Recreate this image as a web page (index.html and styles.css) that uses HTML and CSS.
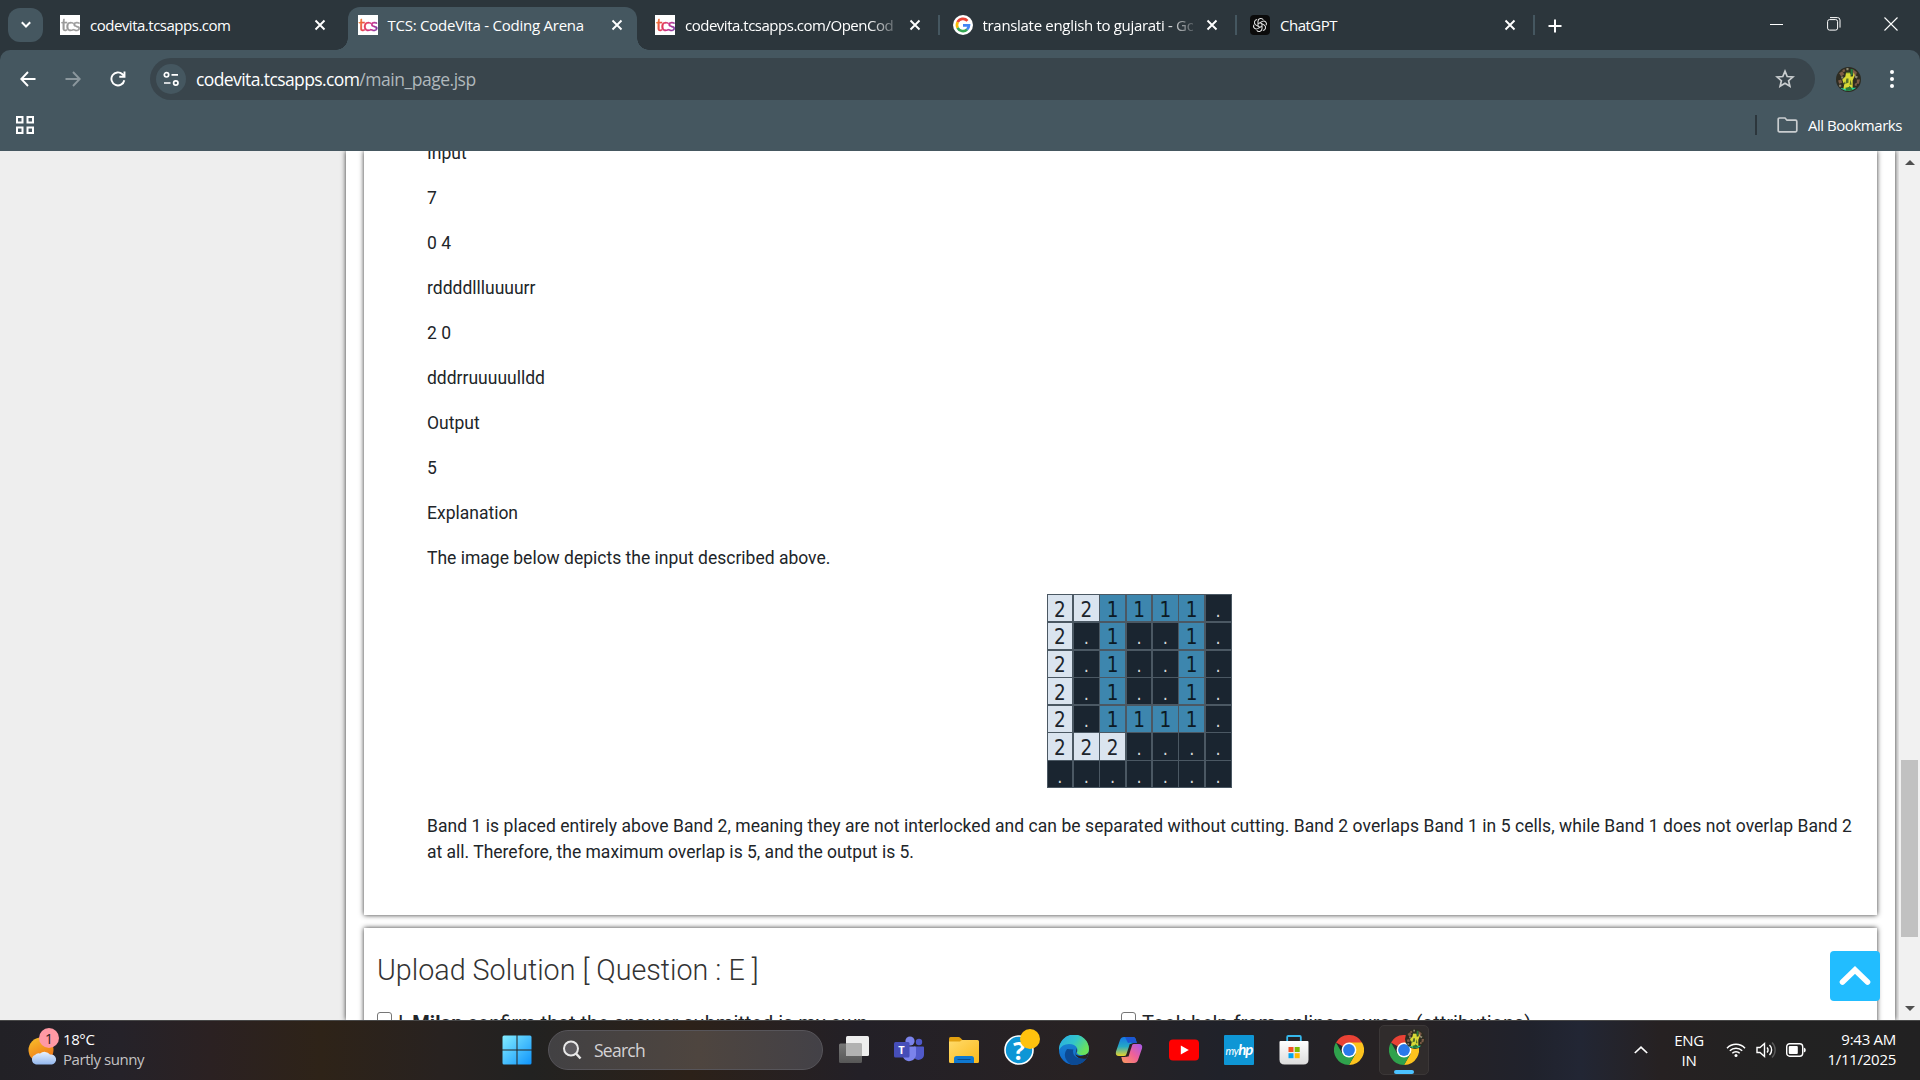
FILE: index.html
```html
<!DOCTYPE html>
<html lang="en">
<head>
<meta charset="utf-8">
<title>TCS: CodeVita - Coding Arena</title>
<link rel="stylesheet" href="styles.css">
</head>
<body>
<svg class="defs" width="0" height="0" aria-hidden="true">
  <defs>
    <symbol id="close" viewBox="0 0 12 12"><path d="M1.5 1.5l9 9M10.5 1.5l-9 9" fill="none" stroke="currentColor" stroke-width="1.9"/></symbol>
    <symbol id="chrome" viewBox="0 0 30 30">
      <path d="M15 15L2 7.5A15 15 0 0 1 28 7.5z" fill="#e94235"/>
      <path d="M15 7.5H28A15 15 0 0 1 15 30L21.5 18.8z" fill="#fcc31e"/>
      <path d="M2 7.5A15 15 0 0 0 15 30L21.5 18.7L8.5 18.7z" fill="#2fa24c"/>
      <circle cx="15" cy="15" r="7.4" fill="#fff"/><circle cx="15" cy="15" r="5.9" fill="#2a79ea"/>
    </symbol>
    <symbol id="photo" viewBox="0 0 24 24">
      <circle cx="12" cy="12" r="12" fill="#2d2c22"/>
      <path d="M3 6l3-2 2 3-3 2zM16 2l4 3-1 4-3-2zM2 13l3-1 1 3-3 1zM20 12l3 0-1 4-2 0zM6 3l2-1 1 2-2 1zM18 16l2-1 0 3-2 0z" fill="#7c5b46"/>
      <path d="M5 9l2 0 0 2-2 0zM3 17l2 0 0 2-2 0zM18 8l3 1-1 2-2-1zM10 1l2 0 0 2-2 0z" fill="#8f8a72"/>
      <path d="M14 2l2 0 0 5-2 2z" fill="#267a3c"/>
      <path d="M9.500 6a2.500 2.500 0 0 1 4.500 1l0 2 2 0 1-4 1 3-2 5 0 8-2 1-1-4-2 4-4-1 1-5-1-1-1-3 3-3z" fill="#d8d936"/>
      <path d="M9.500 6a2.500 2.500 0 0 1 4.500 0zM10 11l2 0 0 4-3 1zM14 12l1 5-2 0zM8 14l1 2-2 1z" fill="#55702a"/>
      <path d="M4 20l5 1 3-1 7.500 0a12 12 0 0 1-14 1z" fill="#25d29a"/>
      <path d="M9 20l5-1 2 3-6 1z" fill="#2c7a35"/>
    </symbol>
    <linearGradient id="win" x1="0" y1="0" x2="1" y2="1"><stop offset="0" stop-color="#83edff"/><stop offset="1" stop-color="#0f94fb"/></linearGradient>
    <linearGradient id="sun" x1="0" y1="0" x2=".5" y2="1"><stop offset="0" stop-color="#f8c32c"/><stop offset="1" stop-color="#ee7415"/></linearGradient>
    <linearGradient id="cloud" x1="0" y1="0" x2="0" y2="1"><stop offset="0" stop-color="#e8f1fd"/><stop offset="1" stop-color="#93b7ee"/></linearGradient>
    <linearGradient id="folder" x1="0" y1="0" x2="1" y2="1"><stop offset="0" stop-color="#ffdb6b"/><stop offset="1" stop-color="#fbb91b"/></linearGradient>
    <linearGradient id="edgeTop" x1="0" y1="0" x2="1" y2=".5"><stop offset="0" stop-color="#28a8e8"/><stop offset=".55" stop-color="#33c5c9"/><stop offset="1" stop-color="#69e35c"/></linearGradient>
    <linearGradient id="edgeLow" x1="0" y1="0" x2="0" y2="1"><stop offset="0" stop-color="#1a8bd6"/><stop offset="1" stop-color="#1066c9"/></linearGradient>
    <linearGradient id="copA" x1="0" y1="0" x2="0" y2="1"><stop offset="0" stop-color="#1477e8"/><stop offset=".5" stop-color="#25a8c4"/><stop offset="1" stop-color="#e8d42a"/></linearGradient>
    <linearGradient id="copB" x1="1" y1="0" x2="0" y2="1"><stop offset="0" stop-color="#a659ee"/><stop offset=".5" stop-color="#ef6197"/><stop offset="1" stop-color="#fb9c5b"/></linearGradient>
    <linearGradient id="store" x1="0" y1="0" x2="0" y2="1"><stop offset="0" stop-color="#fff"/><stop offset="1" stop-color="#dcdcdc"/></linearGradient>
    <linearGradient id="back" x1="0" y1="0" x2="0" y2="1"><stop offset="0" stop-color="#777"/><stop offset="1" stop-color="#575757"/></linearGradient>
  </defs>
</svg>

<header class="browser">
  <div class="tabstrip">
    <button class="tab-search"><svg width="10" height="8" viewBox="0 0 10 8"><path d="M.8 1.300L5 5.500 9.200 1.300" fill="none" stroke="#fff" stroke-width="2"/></svg></button>
    <div class="tab"><span class="fav tcs grey">tcs</span><span class="title">codevita.tcsapps.com</span><svg class="x"><use href="#close"/></svg></div>
    <div class="tab active"><span class="fav tcs">tcs</span><span class="title wide">TCS: CodeVita - Coding Arena</span><svg class="x"><use href="#close"/></svg></div>
    <div class="tab ruled"><span class="fav tcs">tcs</span><span class="title fade">codevita.tcsapps.com/OpenCod</span><svg class="x"><use href="#close"/></svg></div>
    <div class="tab ruled"><svg class="fav" viewBox="0 0 20 20"><circle cx="10" cy="10" r="10" fill="#fff"/><g fill="none" stroke-width="2.700"><path d="M14.500 5.800A6.100 6.100 0 0 0 4.600 7.200" stroke="#ea4335"/><path d="M4.700 7.100A6.100 6.100 0 0 0 4.700 12.900" stroke="#fbbc05"/><path d="M4.600 12.800A6.100 6.100 0 0 0 14.100 14.600" stroke="#34a853"/><path d="M10 10.300H16A6 6 0 0 1 14 14.600" stroke="#4285f4"/></g></svg><span class="title mid fade">translate english to gujarati - Go</span><svg class="x"><use href="#close"/></svg></div>
    <div class="tab ruled"><svg class="fav" viewBox="0 0 20 20"><rect width="20" height="20" rx="4" fill="#0b0b0b"/><g fill="none" stroke="#e4e4e4" stroke-width="1.050"><path d="M8 10.900V6.200a2.900 2.900 0 0 1 5.300-1.400"/><path d="M8 10.900V6.200a2.900 2.900 0 0 1 5.300-1.400" transform="rotate(60 10 10)"/><path d="M8 10.900V6.200a2.900 2.900 0 0 1 5.300-1.400" transform="rotate(120 10 10)"/><path d="M8 10.900V6.200a2.900 2.900 0 0 1 5.300-1.400" transform="rotate(180 10 10)"/><path d="M8 10.900V6.200a2.900 2.900 0 0 1 5.300-1.400" transform="rotate(240 10 10)"/><path d="M8 10.900V6.200a2.900 2.900 0 0 1 5.300-1.400" transform="rotate(300 10 10)"/></g></svg><span class="title">ChatGPT</span><svg class="x"><use href="#close"/></svg></div>
    <svg class="plus" width="14" height="14" viewBox="0 0 14 14"><path d="M7 .500v13M.500 7h13" stroke="#fff" stroke-width="2"/></svg>
    <div class="window-buttons">
      <svg width="14" height="14" viewBox="0 0 14 14"><path d="M0 7.500h13" stroke="#fff"/></svg>
      <svg width="14" height="14" viewBox="0 0 14 14" fill="none" stroke="#fff"><rect x=".600" y="2.600" width="10" height="10.500" rx="2"/><path d="M3 .600h7.500a2.500 2.500 0 0 1 2.500 2.500v7.500"/></svg>
      <svg width="14" height="14" viewBox="0 0 14 14"><path d="M.500 .500l13 13M13.500 .500l-13 13" stroke="#fff" stroke-width="1.100"/></svg>
    </div>
  </div>

  <div class="toolbar">
    <svg class="nav" width="16" height="16" viewBox="0 0 16 16"><path d="M15.500 8H1.500M8 1L1.300 8 8 15" fill="none" stroke="#fff" stroke-width="1.900"/></svg>
    <svg class="nav" width="16" height="16" viewBox="0 0 16 16"><path d="M.500 8h14M8 1l6.700 7L8 15" fill="none" stroke="#8b979d" stroke-width="1.900"/></svg>
    <svg class="nav" width="16" height="16" viewBox="0 0 16 16"><path d="M14.300 9.200A6.500 6.500 0 1 1 12.500 3.300L14.300 5M14.500 .500V5.800H9.300" fill="none" stroke="#fff" stroke-width="1.900"/></svg>
    <div class="address">
      <span class="site"><svg width="16" height="16" viewBox="0 0 16 16" fill="none" stroke="#fff" stroke-width="1.700"><circle cx="3.500" cy="3.800" r="2.200"/><path d="M8.500 3.800H15M1 12h6.500"/><circle cx="12.800" cy="12" r="2.200"/></svg></span>
      <span class="url"><b>codevita.tcsapps.com</b>/main_page.jsp</span>
      <svg class="star" width="20" height="20" viewBox="0 0 20 20"><path d="M10 2.200l2.200 5.300 5.700.500-4.300 3.700 1.300 5.600L10 14.300l-4.900 3 1.300-5.600L2.100 8l5.700-.500z" fill="none" stroke="#c9cdcf" stroke-width="1.700"/></svg>
    </div>
    <svg class="avatar" width="25" height="25"><use href="#photo"/></svg>
    <svg class="dots" width="6" height="20" viewBox="0 0 6 20" fill="#fff"><circle cx="3" cy="3" r="2"/><circle cx="3" cy="10" r="2"/><circle cx="3" cy="17" r="2"/></svg>
  </div>

  <div class="bookmarks">
    <svg width="18" height="18" viewBox="0 0 18 18" fill="none" stroke="#fff" stroke-width="2"><path d="M1 1h5.500v5.500H1zM11.500 1H17v5.500h-5.500zM1 11.500h5.500V17H1zM11.500 11.500H17V17h-5.500z"/></svg>
    <span class="bar"></span>
    <svg class="folder" width="21" height="16" viewBox="0 0 21 16"><path d="M2.500 1H8l2 2.200h8.500q1.300 0 1.300 1.300v9q0 1.300-1.300 1.300h-16q-1.300 0-1.300-1.300V2.300Q1.200 1 2.500 1z" fill="none" stroke="#c9cdcf" stroke-width="1.700"/></svg>
    <span>All Bookmarks</span>
  </div>
</header>

<main class="viewport">
  <div class="sidebar"></div>
  <div class="arena">
    <section class="card problem">
      <p>Input</p>
      <p>7</p>
      <p>0 4</p>
      <p>rddddllluuuurr</p>
      <p>2 0</p>
      <p>dddrruuuuulldd</p>
      <p>Output</p>
      <p>5</p>
      <p>Explanation</p>
      <p>The image below depicts the input described above.</p>
      <div class="grid">
        <i class="b">2</i><i class="b">2</i><i class="a">1</i><i class="a">1</i><i class="a">1</i><i class="a">1</i><i>.</i>
        <i class="b">2</i><i>.</i><i class="a">1</i><i>.</i><i>.</i><i class="a">1</i><i>.</i>
        <i class="b">2</i><i>.</i><i class="a">1</i><i>.</i><i>.</i><i class="a">1</i><i>.</i>
        <i class="b">2</i><i>.</i><i class="a">1</i><i>.</i><i>.</i><i class="a">1</i><i>.</i>
        <i class="b">2</i><i>.</i><i class="a">1</i><i class="a">1</i><i class="a">1</i><i class="a">1</i><i>.</i>
        <i class="b">2</i><i class="b">2</i><i class="b">2</i><i>.</i><i>.</i><i>.</i><i>.</i>
        <i>.</i><i>.</i><i>.</i><i>.</i><i>.</i><i>.</i><i>.</i>
      </div>
      <p class="long"><span>Band 1 is placed entirely above Band 2, meaning they are not interlocked and can be separated without cutting. Band 2 overlaps Band 1 in 5 cells, while Band 1 does not overlap Band 2</span><br>at all. Therefore, the maximum overlap is 5, and the output is 5.</p>
    </section>
    <section class="card upload">
      <h2>Upload Solution [ Question : E ]</h2>
      <div class="checks">
        <label><span class="box"></span><span>I, <b>Milan</b> confirm that the answer submitted is my own.</span></label>
        <label><span class="box"></span><span>Took help from online sources (attributions)</span></label>
      </div>
    </section>
  </div>
  <div class="scrollbar"><span class="arrow up"></span><span class="thumb"></span><span class="arrow down"></span></div>
  <button class="to-top"><svg width="32" height="20" viewBox="0 0 32 20"><path d="M3.500 16L16 4l12.500 12" fill="none" stroke="#fff" stroke-width="5.600" stroke-linecap="round"/></svg></button>
</main>

<footer class="taskbar">
  <div class="weather">
    <svg width="36" height="40" viewBox="0 0 36 40"><circle cx="14" cy="22" r="12.500" fill="url(#sun)"/><path d="M9 36.500a5 5 0 0 1-1-9.500 5 5 0 0 1 5-1.500 7 7 0 0 1 10 1 5 5 0 0 1 2 10z" fill="url(#cloud)"/><circle cx="22" cy="10" r="10" fill="#ff99a4"/></svg>
    <span class="count">1</span>
    <div><span>18°C</span><span class="dim">Partly sunny</span></div>
  </div>
  <div class="apps">
    <svg class="app" viewBox="0 0 30 30"><path d="M.500 2q0-1.500 1.500-1.500h12.500v14H.500zM15.500 .500H28q1.500 0 1.500 1.500v12.500h-14zM.500 15.500h14v14H2q-1.500 0-1.500-1.500zM15.500 15.500h14V28q0 1.500-1.500 1.500H15.500z" fill="url(#win)"/></svg>
    <div class="search"><svg width="20" height="20" viewBox="0 0 20 20" fill="none" stroke="#e8e8e8" stroke-width="2"><circle cx="9" cy="8.500" r="7" fill="#5d5b5f"/><path d="M14 13.500l4.500 5" stroke-width="2.500"/></svg><span>Search</span></div>
    <svg class="app" viewBox="0 0 30 30"><rect x="7" y="1" width="23" height="20" rx="1.500" fill="#eee"/><rect x="0" y="8.500" width="23" height="19.500" rx="1.500" fill="url(#back)"/><path d="M7 8.500h16V21H7z" fill="#b2b2b2"/></svg>
    <div class="app teams"><svg viewBox="0 0 30 30"><circle cx="25" cy="7" r="3.200" fill="#5059c9"/><path d="M20 11.500h9q1 0 1 1V19a5.500 5.500 0 0 1-10 3.500z" fill="#5059c9"/><circle cx="16" cy="6" r="4.600" fill="#7b83eb"/><path d="M9 11.500h12q1 0 1 1V20a6.800 6.800 0 0 1-13 2z" fill="#7b83eb"/><rect x="0" y="7" width="15.500" height="15.500" rx="1.500" fill="#464eb8"/></svg><span>T</span></div>
    <svg class="app" viewBox="0 0 30 30"><path d="M0 8V3.500Q0 2 1.500 2h8q1 0 2 1l2 2v4z" fill="#e2a010"/><path d="M0 6.500h11l2-1.500h15.500q1.500 0 1.500 1.500v20q0 1.500-1.500 1.500h-27Q0 28 0 26.500z" fill="url(#folder)"/><path d="M5 28v-4.500q0-2.500 2.500-2.500h15q2.500 0 2.500 2.500V28z" fill="#0f78d0"/><path d="M8.500 24.500h13" stroke="#0b4c8c"/></svg>
    <div class="app help"><svg viewBox="0 0 30 30"><circle cx="15" cy="15" r="14" fill="#0d96d6" stroke="#fff" stroke-width="1.600"/></svg><span>?</span><em></em></div>
    <svg class="app" viewBox="0 0 30 30"><circle cx="15" cy="15" r="15" fill="url(#edgeLow)"/><path d="M8 14a10 10 0 0 0 11 15.500Q25 28 28 22.500 25 24 21.500 23.500 14 22.500 14 16.500q0-1 .500-2z" fill="#0c4a94"/><path d="M17.500 13q1 4-1.500 6 5 3.500 10.500.500 2.500-1.500 3.500-4A15 15 0 0 1 27.500 23.500Q20 25 16.500 20z" fill="#292425"/><path d="M0 15A15 15 0 0 1 30 14q0 6-6.500 6-6 0-5.500-3 1-1.500 0-4-2-4-8-4-7 0-10 6z" fill="url(#edgeTop)"/></svg>
    <svg class="app" viewBox="0 0 30 30"><path d="M10 2h9q2 0 2.700 2l1 4h-3.500q-2.500 0-3.200 2.500L13.500 18q-1 3-3.500 3H5q-4 0-3-4.500L6 5q1-3 4-3z" fill="url(#copA)"/><path d="M11 2h8q2 0 2.700 2l1 4h-4q-2.500-1-4.700 0z" fill="#1b57d2"/><path d="M20 28h-9q-2 0-2.700-2l-1-4h3.500q2.500 0 3.200-2.500L16.500 12q1-3 3.500-3h5q4 0 3 4.500L24 25q-1 3-4 3z" fill="url(#copB)"/><path d="M15.800 9h2.700l-4 12.500h-2.800z" fill="#2a2021"/></svg>
    <svg class="app" viewBox="0 0 30 30"><rect x="0" y="4.500" width="30" height="21" rx="4" fill="#f00"/><path d="M11.800 10.500v9l8-4.500z" fill="#fff"/></svg>
    <div class="app hp"><span>my<b>hp</b></span></div>
    <svg class="app" viewBox="0 0 30 30"><path d="M8.200 8V2q0-1 1-1h11.600q1 0 1 1v6" fill="none" stroke="#35b8ec" stroke-width="1.800"/><path d="M1.500 6h27q1 0 1 1v17.500q0 5-5 5h-19q-5 0-5-5V7q0-1 1-1z" fill="url(#store)"/><path d="M9.500 12h5v5h-5z" fill="#f25022"/><path d="M15.700 12h5v5h-5z" fill="#7fba00"/><path d="M9.500 18.200h5v5h-5z" fill="#00a4ef"/><path d="M15.700 18.200h5v5h-5z" fill="#ffb900"/></svg>
    <svg class="app"><use href="#chrome"/></svg>
    <div class="app running"><svg width="30" height="30"><use href="#chrome"/></svg><svg class="badge" width="20" height="20"><use href="#photo"/></svg></div>
  </div>
  <div class="tray">
    <svg class="chev" width="14" height="8" viewBox="0 0 14 8"><path d="M.800 7L7 1.200 13.200 7" fill="none" stroke="#fff" stroke-width="1.700"/></svg>
    <div class="lang"><span>ENG</span><span>IN</span></div>
    <svg class="wifi" width="20" height="16" viewBox="0 0 20 16" fill="none" stroke="#fff" stroke-width="1.500"><path d="M1 6.200a12.500 12.500 0 0 1 18 0M3.800 8.700a8.800 8.800 0 0 1 12.400 0M6.300 11.200a5.200 5.200 0 0 1 7.400 0"/><circle cx="10" cy="13.500" r="1.500" fill="#fff" stroke="none"/></svg>
    <svg class="vol" width="20" height="18" viewBox="0 0 20 18" fill="none" stroke="#fff" stroke-width="1.400"><path d="M1 6.500h3L8.500 2.500v13L4 11.500H1z"/><path d="M11 6.500a3.500 3.500 0 0 1 0 5M13.500 4a7 7 0 0 1 0 10"/><path d="M16 1.500a10.500 10.500 0 0 1 0 15" stroke="#5a5a5a"/></svg>
    <svg class="bat" width="20" height="14" viewBox="0 0 20 14"><rect x=".700" y=".700" width="16" height="12.500" rx="3" fill="none" stroke="#fff" stroke-width="1.400"/><rect x="2.800" y="3" width="9" height="8" rx="1" fill="#fff"/><path d="M17.800 4.500q2 .500 2 2.500t-2 2.500z" fill="#fff"/></svg>
    <div class="clock"><span>9:43 AM</span><span>1/11/2025</span></div>
  </div>
</footer>
</body>
</html>
```
FILE: styles.css
```css
* { box-sizing: border-box; }
body {
  margin: 0; width: 1920px; height: 1080px; overflow: hidden;
  display: flex; flex-direction: column;
  font: 15px/20px "Open Sans", "Noto Sans", sans-serif; color: #fff;
}
svg { display: block; flex: none; }
button { border: 0; padding: 0; display: flex; align-items: center; justify-content: center; }
.defs { position: absolute; }

/* browser chrome */
.browser { height: 151px; flex: none; background: #2c363c; }
.tabstrip { height: 50px; display: flex; align-items: center; padding-left: 8px; }
.tab-search { width: 35px; height: 34px; border-radius: 12px; background: #455760; margin-right: 7px; }
.tab { position: relative; width: 297.5px; height: 50px; display: flex; align-items: center; padding: 0 22px 0 10px; flex: none; }
.tab.active { z-index: 1; }
.tab.active::before {
  content: ""; position: absolute; z-index: -1; inset: 7px 8px 0 0;
  background: #455760; border-radius: 12px 12px 0 0;
}
.tab.active::after {
  content: ""; position: absolute; z-index: -1; left: -12px; right: -4px; bottom: 0; height: 12px;
  background:
    radial-gradient(circle at 0 0, transparent 11.5px, #455760 12px) left / 12px 12px no-repeat,
    radial-gradient(circle at 100% 0, transparent 11.5px, #455760 12px) right / 12px 12px no-repeat;
}
.tab.ruled::after { content: ""; position: absolute; right: 3px; top: 15px; width: 2px; height: 20px; background: #455760; }
.fav { width: 20px; height: 20px; flex: none; margin-right: 10px; }
.tcs {
  color: transparent; font: 400 18px/18px "Lato", sans-serif; letter-spacing: -1.6px; text-align: center;
  -webkit-text-stroke: .4px transparent;
  background: linear-gradient(110deg, #f5a11c, #e53a55 40%, #c62d8b 65%, #5a3aa8) text, #fff;
}
.tcs.grey { background: linear-gradient(#999, #999) text, #fff; }
.title { flex: 1; white-space: nowrap; letter-spacing: -.49px; margin-right: 13px; min-width: 0; }
.title.wide { letter-spacing: -.24px; }
.title.mid { letter-spacing: -.31px; }
.title.fade { mask-image: linear-gradient(90deg, #000 87%, rgba(0,0,0,.2)); }
.x { width: 12px; height: 12px; }
.plus { margin: 1px 0 0 10px; }
.window-buttons { display: flex; gap: 43px; margin: -2px 22px 0 auto; }
.toolbar { height: 51px; padding-top: 7px; display: flex; align-items: center; background: #455760; border-radius: 10px 10px 0 0; }
.nav { margin: 0 9px 0 20px; }
.address { margin-left: 15px; width: 1665px; height: 42px; border-radius: 21px; background: #39454c; display: flex; align-items: center; padding: 0 20px 0 6px; }
.site { width: 30px; height: 30px; border-radius: 50%; background: #455760; display: flex; align-items: center; justify-content: center; }
.url { margin-left: 10px; font-size: 17.5px; letter-spacing: -.47px; color: #b0b8bc; flex: 1; }
.url b { font-weight: 400; color: #fff; letter-spacing: -.6px; }
.avatar { margin-left: 21px; }
.dots { margin-left: 28px; }
.bookmarks { height: 50px; background: #455760; display: flex; align-items: center; padding: 0 18px 2px 15.5px; letter-spacing: -.45px; }
.bar { width: 2px; height: 20px; background: #2c363c; margin: 0 20px 0 auto; }
.folder { margin-right: 10px; }

/* page */
.viewport { position: relative; height: 869px; flex: none; display: flex; overflow: hidden; background: #eee; color: #212529; }
.sidebar { width: 346px; flex: none; }
.arena { width: 1549px; flex: none; background: #fff; box-shadow: 0 0 5px #333; padding: 0 18px; }
.card { background: #fff; box-shadow: 0 0 5px #333; }
.problem { height: 764px; overflow: hidden; clip-path: inset(0 -8px -8px -8px); padding: 0 0 0 63px; font: 17.5px/26.25px Roboto, sans-serif; }
.problem p { margin: 0 0 18.75px; white-space: nowrap; }
.problem p:first-child { margin-top: -11px; }
.problem .long { margin-top: 24.5px; }
.long span { letter-spacing: .049px; }
.grid { width: 185px; height: 194px; margin: 23px 0 0 619.5px; display: grid; grid-template: repeat(7, 1fr) / repeat(7, 1fr); gap: 1.500px; padding: 1px; background: #4b5863; }
.grid i { display: flex; align-items: center; justify-content: center; min-width: 0; min-height: 0; background: #1a2530; color: #d8d8d8; font: 18px/24px "DejaVu Sans Condensed", "DejaVu Sans", sans-serif; padding-top: 5px; }
.grid .a, .grid .b { font-size: 20.5px; padding-top: 3px; }
.grid .a { background: #3d86ae; color: #0c1a24; }
.grid .b { background: #dae4ef; color: #1c242c; }
.upload { margin-top: 13px; height: 140px; padding: 22px 0 0 13px; }
.upload h2 { margin: 0; font: 300 28.7px/40px Roboto, sans-serif; color: #333; }
.checks { display: grid; grid-template-columns: 744px 1fr; margin-top: 18px; font: 20px/30px Roboto, sans-serif; color: #212529; white-space: nowrap; }
.checks label { display: flex; gap: 6px; }
.box { width: 15px; height: 15px; margin-top: 4px; border: 1px solid #767676; border-radius: 3px; background: #fff; }
.scrollbar { margin-left: auto; width: 21px; background: #f1f1f1; display: flex; flex-direction: column; align-items: center; padding: 9px 0 9px; }
.thumb { width: 17px; height: 177px; background: #c1c1c1; margin: 595px 0 auto; }
.arrow { border: 5px solid transparent; }
.up { border-bottom-color: #505050; border-top: 0; }
.down { border-top-color: #505050; border-bottom: 0; }
.to-top { position: absolute; left: 1830px; top: 800px; width: 50px; height: 50px; border-radius: 4px; background: #22bdff; }

/* taskbar */
.taskbar {
  height: 60px; flex: none; display: flex; align-items: center; border-top: 1px solid #484848; padding-bottom: 1px;
  background: linear-gradient(90deg, #222126 0, #252229 120px, #2b2122 210px, #2e2318 320px, #282220 440px, #222221 530px, #2c2119 690px, #232027 860px, #282223 1080px, #20222a 1220px, #272223 1400px, #20222c 1530px, #222634 1580px, #262122 1660px, #222 1780px, #222122 1920px);
}
.weather { position: relative; display: flex; align-items: center; padding-left: 27px; width: 503px; }
.weather > svg { margin: -4px 0 0; }
.weather > div, .lang, .clock { display: flex; flex-direction: column; line-height: 20px; margin-top: -2px; }
.weather > div { letter-spacing: -.4px; }
.dim { color: #c4c2c4; letter-spacing: -.44px; }
.count { position: absolute; left: 39px; top: -2px; width: 20px; text-align: center; color: #2c1a1d; font-size: 14px; }
.apps { display: flex; align-items: center; }
.app { position: relative; width: 30px; height: 30px; margin-right: 25px; flex: none; }
.app:first-child { margin: 0 15px 0 -1px; }
.app > svg:first-child { width: 30px; height: 30px; }
.search { width: 275px; height: 40px; margin: 0 16px 0 1px; border-radius: 20px; border: 1px solid #57555a; background: linear-gradient(90deg, #424143, #4e453f 55%, #434147); display: flex; align-items: center; gap: 12px; padding-left: 13px; color: #d4d2d4; font-size: 17.5px; letter-spacing: -.74px; }
.teams span { position: absolute; left: 0; top: 7px; width: 15px; text-align: center; font: 700 11px/15px "Open Sans", sans-serif; }
.help span { position: absolute; left: 0; top: 0; width: 30px; text-align: center; font: 700 25px/30px "Open Sans", sans-serif; }
.help em { position: absolute; left: 16px; top: -6px; width: 20px; height: 20px; border-radius: 50%; background: #ffc20e; }
.hp { background: #0e96d5; border-radius: 1px; display: flex; align-items: center; justify-content: center; font: italic 11px/30px Lato, sans-serif; letter-spacing: -.6px; }
.hp b { font-size: 15px; letter-spacing: -1px; }
.running { width: 50px; height: 50px; margin: 0 0 0 -10px; border: 1px solid #3b3737; border-radius: 5px; background: #302c2c; padding: 9px; }
.running::after { content: ""; position: absolute; left: 14px; top: 44px; width: 20px; height: 4px; border-radius: 2px; background: #4cc2ff; }
.badge { position: absolute; left: 25px; top: 3px; }
.tray { display: flex; align-items: center; margin-left: auto; padding-right: 24px; }
.lang { width: 40px; align-items: center; margin: 0 17px 0 21px; letter-spacing: -.3px; }
.vol { margin: 0 10px; }
.clock { width: 90px; align-items: flex-end; letter-spacing: -.27px; }
```
